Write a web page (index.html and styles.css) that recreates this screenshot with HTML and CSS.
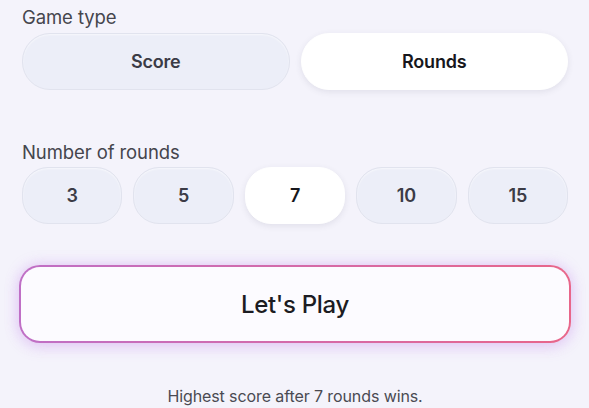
FILE: index.html
```html
<!DOCTYPE html>
<html>
<head>
<meta charset="utf-8">
<link rel="stylesheet" href="styles.css">
</head>
<body>
<div class="page">
  <div class="label label-first">Game type</div>
  <div class="seg">
    <button class="opt">Score</button>
    <button class="opt active">Rounds</button>
  </div>
  <div class="label label-second">Number of rounds</div>
  <div class="nums">
    <button class="opt num">3</button>
    <button class="opt num">5</button>
    <button class="opt num active">7</button>
    <button class="opt num">10</button>
    <button class="opt num">15</button>
  </div>
  <button class="play">Let's Play</button>
  <div class="hint">Highest score after 7 rounds wins.</div>
</div>
</body>
</html>
```
FILE: styles.css
```css
html, body {
  margin: 0;
  padding: 0;
  background: #f4f3fb;
}
body {
  font-family: Inter, "Noto Sans", sans-serif;
  color: #3a3a44;
  width: 589px;
  height: 408px;
  overflow: hidden;
}
.page {
  padding: 0 21px 0 22px;
  display: flex;
  flex-direction: column;
}
.label {
  font-size: 18.5px;
  line-height: 22px;
  color: #45454d;
  letter-spacing: -0.1px;
}
.label-first {
  margin-top: 6px;
  height: 27px;
}
.label-second {
  margin-top: 51px;
  height: 26px;
}
.seg {
  display: grid;
  grid-template-columns: 1fr 1fr;
  gap: 11px;
}
.opt {
  font-family: inherit;
  height: 57px;
  border-radius: 28px;
  border: 1px solid #e1e3ee;
  background: #eceef8;
  color: #3b3b46;
  font-size: 18px;
  font-weight: 600;
  letter-spacing: -0.2px;
  padding: 0;
  box-shadow: inset 0 1px 2px rgba(255,255,255,0.6);
}
.opt.active {
  background: #ffffff;
  border-color: #ffffff;
  color: #17171c;
  box-shadow: 0 2px 6px rgba(60, 60, 90, 0.10);
}
.nums {
  display: grid;
  grid-template-columns: repeat(5, 1fr);
  gap: 11px;
}
.num {
  border-radius: 26px;
}
.play {
  margin: 41px -3px 0 -3px;
  height: 78px;
  border-radius: 21px;
  border: 2.5px solid transparent;
  background:
    linear-gradient(#fcfbff, #fcfbff) padding-box,
    linear-gradient(90deg, #bf6fc6 0%, #d46aa9 50%, #e8668a 100%) border-box;
  box-shadow: 0 0 14px rgba(200, 140, 240, 0.35), 0 4px 16px rgba(190, 120, 230, 0.2);
  font-family: inherit;
  font-size: 24px;
  font-weight: 500;
  color: #1c1c22;
  letter-spacing: -0.3px;
  padding: 0;
}
.hint {
  margin-top: 43px;
  text-align: center;
  font-size: 16px;
  color: #4a4a52;
  letter-spacing: -0.1px;
  line-height: 20px;
}
```
